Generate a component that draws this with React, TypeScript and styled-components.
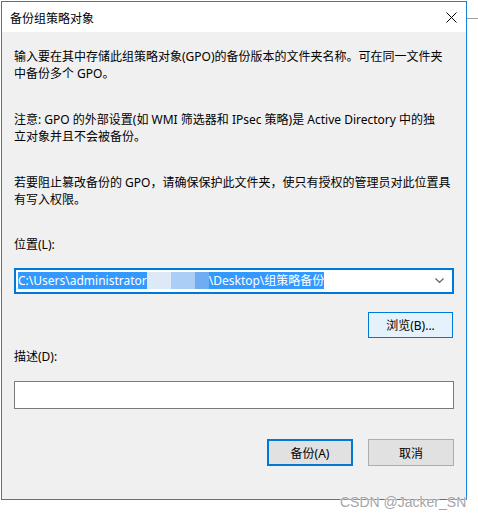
import React from "react";
import styled, { createGlobalStyle } from "styled-components";

const Global = createGlobalStyle`
  html, body { margin: 0; padding: 0; background: #ffffff; }
  body {
    width: 478px; height: 517px; overflow: hidden;
    font-family: "Noto Sans", "Noto Sans CJK SC", sans-serif;
    font-size: 12px; color: #000;
  }
`;

const Desktop = styled.div`
  position: relative;
  display: flex;
  align-items: flex-start;
  padding: 1px 0 0 1px;
  width: 478px;
  height: 517px;
  box-sizing: border-box;
`;

const SideEdge = styled.div`
  flex: 1;
  height: 1px;
  margin-top: 17px;
  background: #a0a0a0;
`;

const Window = styled.div`
  width: 466px;
  height: 499px;
  box-sizing: border-box;
  border: 1px solid #1883d7;
  display: flex;
  flex-direction: column;
  background: #f0f0f0;
`;

const TitleBar = styled.div`
  height: 30px;
  background: #ffffff;
  display: flex;
  align-items: center;
  justify-content: space-between;
  padding: 0 8px 0 8px;
  font-family: "Noto Sans CJK SC", sans-serif;
  font-size: 12px;
`;

const CloseIcon = styled.svg`
  width: 11px;
  height: 11px;
  margin-right: 1px;
`;

const Body = styled.div`
  flex: 1;
  display: flex;
  flex-direction: column;
  padding: 17px 12px 0 12px;
`;

const Para = styled.p<{ $last?: boolean }>`
  margin: 0 0 ${(p) => (p.$last ? 0 : 30)}px 0;
  line-height: 16.5px;
  white-space: nowrap;
`;

const Label = styled.div<{ $gap: number }>`
  line-height: 16.5px;
  margin-top: ${(p) => p.$gap}px;
`;

const Combo = styled.div`
  margin-top: 14px;
  height: 26px;
  box-sizing: border-box;
  border: 2px solid #0078d7;
  background: #ffffff;
  display: flex;
  align-items: center;
  padding: 0 8px 0 2px;
`;

const Selection = styled.span`
  display: inline-flex;
  align-items: center;
  height: 17px;
  background: #3399ff;
  color: #ffffff;
  line-height: 17px;
  white-space: nowrap;
`;

const Mosaic = styled.span<{ $c: string; $w: number }>`
  display: inline-block;
  width: ${(p) => p.$w}px;
  height: 17px;
  background: ${(p) => p.$c};
`;

const Chevron = styled.svg`
  margin-left: auto;
  width: 9px;
  height: 6px;
`;

const ButtonRow = styled.div<{ $gap: number }>`
  display: flex;
  justify-content: flex-end;
  gap: 15px;
  margin-top: ${(p) => p.$gap}px;
`;

const Button = styled.button<{ $variant?: "default" | "hover" | "normal" }>`
  width: ${(p) => (p.$variant === "hover" ? 85 : 86)}px;
  height: ${(p) => (p.$variant === "hover" ? 26 : 27)}px;
  margin-right: ${(p) => (p.$variant === "hover" ? 1 : 0)}px;
  box-sizing: border-box;
  font-family: "Noto Sans", "Noto Sans CJK SC", sans-serif;
  font-size: 12px;
  color: #000;
  padding: 0;
  display: flex;
  align-items: center;
  justify-content: center;
  background: ${(p) => (p.$variant === "hover" ? "#e5f1fb" : "#e1e1e1")};
  border: ${(p) =>
    p.$variant === "default"
      ? "2px solid #0078d7"
      : p.$variant === "hover"
      ? "1px solid #0078d7"
      : "1px solid #adadad"};
`;

const TextBox = styled.div`
  margin-top: 16px;
  height: 28px;
  box-sizing: border-box;
  border: 1px solid #7a7a7a;
  background: #ffffff;
`;

const Watermark = styled.div`
  position: absolute;
  left: 340px;
  top: 494px;
  font-family: "Liberation Sans", sans-serif;
  font-size: 14px;
  color: #a6a6a6;
  text-shadow: 0 0 2px #fff, 0 0 1px #fff;
  white-space: nowrap;
`;

export default function App() {
  return (
    <>
      <Global />
      <Desktop>
        <Window>
          <TitleBar>
            <span>备份组策略对象</span>
            <CloseIcon viewBox="0 0 11 11">
              <path d="M0.5 0.5 L10.5 10.5 M10.5 0.5 L0.5 10.5" stroke="#000" strokeWidth="1" fill="none" />
            </CloseIcon>
          </TitleBar>
          <Body>
            <Para>
              输入要在其中存储此组策略对象(GPO)的备份版本的文件夹名称。可在同一文件夹
              <br />
              中备份多个 GPO。
            </Para>
            <Para>
              注意: GPO 的外部设置(如 WMI 筛选器和 IPsec 策略)是 Active Directory 中的独
              <br />
              立对象并且不会被备份。
            </Para>
            <Para $last>
              若要阻止篡改备份的 GPO，请确保保护此文件夹，使只有授权的管理员对此位置具
              <br />
              有写入权限。
            </Para>
            <Label $gap={29}>位置(L):</Label>
            <Combo>
              <Selection>C:\Users\administrator</Selection>
              <Mosaic $c="#dde9f6" $w={24} />
              <Mosaic $c="#abcef6" $w={24} />
              <Mosaic $c="#6eadf3" $w={14} />
              <Selection>\Desktop\组策略备份</Selection>
              <Chevron viewBox="0 0 9 6">
                <path d="M0.5 0.5 L4.5 4.5 L8.5 0.5" stroke="#606060" strokeWidth="1.2" fill="none" />
              </Chevron>
            </Combo>
            <ButtonRow $gap={18}>
              <Button $variant="hover">浏览(B)...</Button>
            </ButtonRow>
            <Label $gap={11}>描述(D):</Label>
            <TextBox />
            <ButtonRow $gap={30}>
              <Button $variant="default">备份(A)</Button>
              <Button $variant="normal">取消</Button>
            </ButtonRow>
          </Body>
        </Window>
        <SideEdge />
        <Watermark>CSDN @Jacker_SN</Watermark>
      </Desktop>
    </>
  );
}
